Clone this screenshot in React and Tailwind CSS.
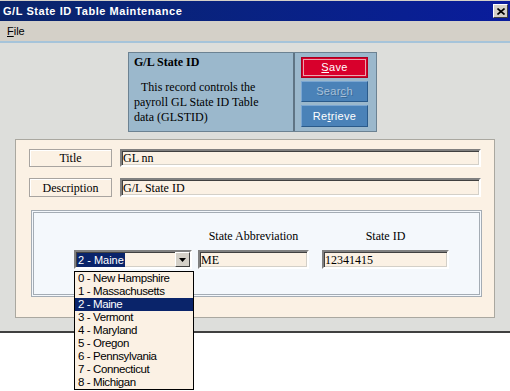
import React from 'react';

const sans = "font-['Liberation_Sans',Arial,sans-serif]";
const serif = "font-['Liberation_Serif','Times_New_Roman',serif]";

const inset =
  "border-2 border-t-[#808080] border-l-[#808080] border-b-white border-r-white shadow-[inset_1px_1px_0_#404040,inset_-1px_-1px_0_#d4d0c8] bg-[#fbf1e4]";

const states = [
  "0 - New Hampshire",
  "1 - Massachusetts",
  "2 - Maine",
  "3 - Vermont",
  "4 - Maryland",
  "5 - Oregon",
  "6 - Pennsylvania",
  "7 - Connecticut",
  "8 - Michigan",
];

const LabelBox = ({ children }) => (
  <div className={`w-[83px] h-full border border-[#a8a4a0] shadow-[inset_1px_1px_0_#ffffff] flex items-center justify-center text-[12px] text-black ${serif}`}>
    {children}
  </div>
);

const TextField = ({ value, className = "" }) => (
  <div className={`${inset} ${serif} text-[12px] leading-[14px] text-black pl-[1px] flex items-center ${className}`}>
    {value}
  </div>
);

const StateSelect = () => (
  <div className="relative w-[118px] h-[19px]">
    <div className={`${inset} h-full flex items-center justify-between pl-[1px]`}>
      <span className={`${sans} text-[11px] leading-[14px] bg-[#0a246a] text-white px-[1px]`}>2 - Maine</span>
      <div className="w-[15px] h-[15px] bg-[#d4d0c8] border border-t-white border-l-white border-b-[#404040] border-r-[#404040] flex items-center justify-center">
        <svg width="7" height="4" viewBox="0 0 7 4"><path d="M0 0h7L3.5 4z" fill="#000" /></svg>
      </div>
    </div>
    {/* Open dropdown list */}
    <div className="absolute left-0 top-[21px] w-[120px] border border-black bg-[#fbf1e4] z-10">
      {states.map((s) => (
        <div
          key={s}
          className={`h-[13px] leading-[13px] pl-[3px] text-[11.5px] tracking-[-0.4px] ${sans} ${
            s === "2 - Maine" ? "bg-[#0a246a] text-white" : "text-black"
          }`}
        >
          {s}
        </div>
      ))}
    </div>
  </div>
);

export default function App() {
  return (
    <div className="w-[510px] h-[391px] bg-white overflow-hidden">
      <div className="h-[333px] flex flex-col border-b-2 border-b-[#404040] bg-[#dddedb]">
        {/* Title bar */}
        <div className="border-t border-[#d4d0c8] h-[21px] bg-gradient-to-r from-[#0a246a] to-[#0a1c9c] flex items-center justify-between pl-[3px] pr-[2px]">
          <span className={`${sans} text-white font-bold text-[11px] tracking-[0.55px]`}>G/L State ID Table Maintenance</span>
          <div className="w-[15px] h-[14px] bg-[#d4d0c8] border border-t-white border-l-white border-b-[#404040] border-r-[#404040] flex items-center justify-center">
            <svg width="8" height="7" viewBox="0 0 8 7"><path d="M0.5 0.5l7 6M7.5 0.5l-7 6" stroke="#000" strokeWidth="1.6" /></svg>
          </div>
        </div>

        {/* Menu */}
        <div className={`h-[20px] bg-[#d4d0c8] flex items-center pl-[7px] text-[11px] text-black ${sans}`}>
          <span><span className="underline">F</span>ile</span>
        </div>
        <div className="h-[2px] bg-[#a6c4da]" />

        {/* Body */}
        <div className="flex-1 pt-[9px] flex flex-col">
          {/* Info / button panel */}
          <div className="ml-[128px] w-[249px] h-[80px] border border-[#6c8292] bg-[#9bb8cc] flex">
            <div className={`w-[164px] pl-[5px] pt-[2px] text-black ${serif} text-[12px]`}>
              <div className="font-bold leading-[14px]">G/L State ID</div>
              <div className="mt-[11px] leading-[15px]">
                <div className="pl-[7px]">This record controls the</div>
                <div>payroll GL State ID Table</div>
                <div>data (GLSTID)</div>
              </div>
            </div>
            <div className="w-[2px] bg-[#5f7484]" />
            <div className={`flex-1 pl-[6px] pt-[4px] flex flex-col gap-[3px] ${sans} text-[11px] tracking-[0.3px]`}>
              <button className="w-[67px] h-[21px] bg-[#d8002c] border border-[#a8001e] shadow-[inset_0_0_0_1px_#d8002c,inset_0_0_0_2px_#e8a4ae] text-white flex items-center justify-center">
                <span><span className="underline">S</span>ave</span>
              </button>
              <button className="w-[67px] h-[21px] bg-[#4a82b8] border border-t-[#7aa6d2] border-l-[#7aa6d2] border-b-[#2a5a8a] border-r-[#2a5a8a] text-[#a8c0d8] [text-shadow:1px_1px_0_#3a6a98] flex items-center justify-center">
                <span>Sear<span className="underline">c</span>h</span>
              </button>
              <button className="w-[67px] h-[22px] bg-[#4a82b8] border border-t-[#7aa6d2] border-l-[#7aa6d2] border-b-[#2a5a8a] border-r-[#2a5a8a] text-white flex items-center justify-center">
                <span>Re<span className="underline">t</span>rieve</span>
              </button>
            </div>
          </div>

          {/* Form panel */}
          <div className="mt-[7px] ml-[15px] w-[480px] h-[179px] border border-[#aaa8a0] bg-[#fbf1e4] pt-[9px] pl-[13px] flex flex-col">
            <div className="flex gap-[8px] h-[18px]">
              <LabelBox>Title</LabelBox>
              <TextField value="GL nn" className="w-[361px] h-[18px]" />
            </div>
            <div className="flex gap-[8px] h-[19px] mt-[11px]">
              <LabelBox>Description</LabelBox>
              <TextField value="G/L State ID" className="w-[361px] h-[19px]" />
            </div>

            {/* Detail panel */}
            <div className="mt-[13px] ml-[2px] w-[451px] h-[87px] border-[3px] border-double border-[#a4acb4] bg-[#f4f8fc] pt-[16px] pl-[40px] flex items-start">
              <div className="mt-[21px]">
                <StateSelect />
              </div>
              <div className="ml-[6px] flex flex-col items-center">
                <div className={`h-[14px] leading-[14px] text-[12px] text-black ${serif}`}>State Abbreviation</div>
                <TextField value="ME" className="mt-[7px] w-[111px] h-[19px]" />
              </div>
              <div className="ml-[13px] flex flex-col items-center">
                <div className={`h-[14px] leading-[14px] text-[12px] text-black ${serif}`}>State ID</div>
                <TextField value="12341415" className="mt-[7px] w-[127px] h-[19px]" />
              </div>
            </div>
          </div>
        </div>
      </div>
    </div>
  );
}
